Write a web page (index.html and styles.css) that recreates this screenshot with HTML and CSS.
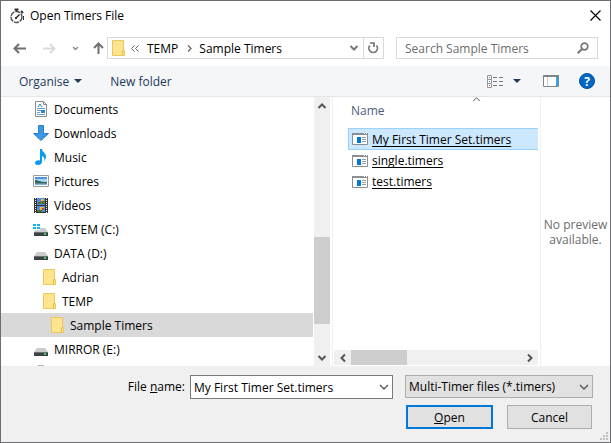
FILE: index.html
```html
<!DOCTYPE html>
<html lang="en-GB">
<head>
<meta charset="utf-8">
<title>Open Timers File</title>
<link rel="stylesheet" href="styles.css">
</head>
<body>
<svg class="defs" aria-hidden="true">
  <symbol id="folder" viewBox="0 0 16 16">
    <path d="M2.5 .5h11v10h1v5h-12z" fill="#ffe490" stroke="#ecc75c"/>
    <path d="M12.5 15v-4.500h1" fill="none" stroke="#e8bb3e"/>
  </symbol>
  <symbol id="drive" viewBox="0 0 16 16">
    <path d="M4 7h8l3 4H1z" fill="#c9cbcd"/>
    <path d="M1 11h14v4H1z" fill="#3c4043"/>
    <path d="M1 11h14v1H1z" fill="#6b7074"/>
    <path d="M11 12h2v2h-2z" fill="#37d651"/>
  </symbol>
  <symbol id="timerfile" viewBox="0 0 16 16">
    <path d="M.5 2.500h15v11H.5z" fill="#fff" stroke="#8a8f94"/>
    <path d="M0 2h16v2H0z" fill="#8a8f94"/>
    <path d="M12 2.500h1M14 2.500h1" stroke="#fff"/>
    <path d="M5 6h4v6H5z" fill="#0078d7"/>
    <path d="M10 6.500h4M10 8.500h4M10 10.500h4" stroke="#9a9da0"/>
  </symbol>
  <symbol id="chevron" viewBox="0 0 10 6">
    <path d="M1 1l4 4 4-4" fill="none" stroke="currentColor" stroke-width="1.300"/>
  </symbol>
  <symbol id="thick-chevron" viewBox="0 0 10 6">
    <path d="M1.500 1L5 4.500 8.500 1" fill="none" stroke="currentColor" stroke-width="2"/>
  </symbol>
</svg>

<div class="dialog">
  <header class="titlebar">
    <svg class="icon" viewBox="0 0 16 16"><circle cx="7.500" cy="9" r="5.500" fill="#fff" stroke="#555" stroke-width="1.500" stroke-dasharray="5 1"/><path d="M5.500 1.500h4M7.500 1.500v2M12 3l2 2" stroke="#333" stroke-width="2"/><path d="M7 10l3.500-3.500" stroke="#222" stroke-width="1.500"/><path d="M6 9h2v2H6zM14 8h1v4h-1z" fill="#333"/></svg>
    <h1>Open Timers File</h1>
    <button class="plain" aria-label="Close"><svg width="11" height="11" viewBox="0 0 11 11"><path d="M.5.5l10 10M10.500.5l-10 10" stroke="#000" stroke-width="1.200"/></svg></button>
  </header>

  <nav class="navbar">
    <div class="history">
      <button class="plain back" aria-label="Back"><svg width="13" height="11" viewBox="0 0 13 11"><path d="M13 5.500H1.500M6 1L1.500 5.500 6 10" fill="none" stroke="#707070" stroke-width="2"/></svg></button>
      <button class="plain forward" aria-label="Forward"><svg width="13" height="11" viewBox="0 0 13 11"><path d="M0 5.500h11.500M7 1l4.500 4.500L7 10" fill="none" stroke="#dcdcdc" stroke-width="2"/></svg></button>
      <button class="plain recent" aria-label="Recent locations"><svg width="7" height="5" viewBox="0 0 10 6"><use href="#thick-chevron"/></svg></button>
      <button class="plain" aria-label="Up"><svg width="11" height="12" viewBox="0 0 11 12"><path d="M5.500 12V1.500M1 6l4.500-4.500L10 6" fill="none" stroke="#707070" stroke-width="2"/></svg></button>
    </div>
    <div class="address">
      <svg class="icon" viewBox="0 0 16 16"><use href="#folder"/></svg>
      <svg class="crumb-more" width="8" height="7" viewBox="0 0 8 7"><path d="M3.500.5l-3 3 3 3M7.500.5l-3 3 3 3" fill="none" stroke="#666"/></svg>
      <a href="#temp">TEMP</a>
      <svg class="crumb-next" width="5" height="7" viewBox="0 0 5 7"><path d="M1 .5l3 3-3 3" fill="none" stroke="#666" stroke-width="1.300"/></svg>
      <a href="#sample">Sample Timers</a>
      <button class="plain drop" aria-label="Previous locations"><svg width="10" height="6"><use href="#thick-chevron"/></svg></button>
      <button class="plain refresh" aria-label="Refresh"><svg width="11" height="12" viewBox="0 0 11 12"><path d="M1.800 3.500A4.300 4.300 0 1 0 8.500 3.500" fill="none" stroke="#777" stroke-width="1.700"/><path d="M2 1h4v4" fill="none" stroke="#777" stroke-width="1.700"/></svg></button>
    </div>
    <div class="search">
      <input type="search" placeholder="Search Sample Timers" aria-label="Search Sample Timers">
      <svg width="12" height="12" viewBox="0 0 12 12"><circle cx="7.500" cy="4.500" r="3.300" fill="none" stroke="#777" stroke-width="1.700"/><path d="M5 7L.8 11.200" stroke="#777" stroke-width="2"/></svg>
    </div>
  </nav>

  <div class="toolbar">
    <button class="plain">Organise <svg width="8" height="4" viewBox="0 0 8 4"><path d="M0 0h8L4 4z" fill="#1e395b"/></svg></button>
    <button class="plain">New folder</button>
    <div class="views">
      <button class="plain" aria-label="Change your view"><svg width="16" height="13" viewBox="0 0 16 13"><path d="M.5.500h4v12h-4zM.5 4.500h4M.5 8.500h4" fill="#fff" stroke="#979797"/><path d="M2 2h1v1H2z" fill="#777"/><path d="M2 6h1v1H2z" fill="#1a85d8"/><path d="M2 10h1v1H2z" fill="#d22"/><path d="M6 2.500h4M12 2.500h4M6 6.500h4M12 6.500h4M6 10.500h4M12 10.500h4" stroke="#777"/></svg></button>
      <button class="plain more" aria-label="More options"><svg width="8" height="4" viewBox="0 0 8 4"><path d="M0 0h8L4 4z" fill="#1e395b"/></svg></button>
      <button class="plain pane" aria-label="Hide the preview pane"><svg width="16" height="12" viewBox="0 0 16 12"><path d="M.5.500h15v11H.5z" fill="#fff" stroke="#808488"/><path d="M0 0h16v2H0z" fill="#808488"/><path d="M4.500 2v9" stroke="#ccc"/><path d="M13 2h2v9h-2z" fill="#33a3ee"/></svg></button>
      <button class="plain help" aria-label="Help">?</button>
    </div>
  </div>

  <main class="panes">
    <ul class="tree">
      <li><svg class="icon" viewBox="0 0 16 16"><path d="M2.500.5h8l3 3v12h-11z" fill="#fff" stroke="#8c8c8c"/><path d="M10.500.5v3h3" fill="none" stroke="#8c8c8c"/><path d="M5 6l2-3 2 3" fill="none" stroke="#2585d0"/><path d="M4 7.500h8M4 9.500h4M4 11.500h3M4 13.500h8" stroke="#6aa2cf"/><path d="M8 9h4v3H8z" fill="#2e86c9"/></svg>Documents</li>
      <li><svg class="icon" viewBox="0 0 16 16"><path d="M5.500.5h5v8h5L8 15.500.5 8.500h5z" fill="#3b97e8" stroke="#2d7fca"/></svg>Downloads</li>
      <li><svg class="icon" viewBox="0 0 16 16"><path d="M7 0h2c0 3 4 4 4 7.500 0 2-1 3.500-2 4.500 1-3 0-4-2-5v6c0 2-2 3-4 3s-3-1-3-2.300C2 12 4 11 7 11.400z" fill="#0a98f5"/></svg>Music</li>
      <li><svg class="icon" viewBox="0 0 16 16"><path d="M.5 2.500h15v11H.5z" fill="#fff" stroke="#9a9a9a"/><path d="M2 4h12v8H2z" fill="#a9d5f5"/><path d="M2 4h12v2H2z" fill="#4d94dc"/><path d="M2 7c3 0 4 2 12 2v3H2z" fill="#34675f"/><path d="M2 10.500h12V12H2z" fill="#82b3d2"/></svg>Pictures</li>
      <li><svg class="icon" viewBox="0 0 16 16"><path d="M1 1h14v15H1z" fill="#333"/><path d="M4 1h8v7H4zM4 9h8v6H4z" fill="#4d8ee6"/><path d="M2.500 1v15M13.500 1v15" stroke="#eee" stroke-dasharray="1 1"/><path d="M8 2h3v3H8zM7 10h4v3H7z" fill="#efb72e"/><path d="M9 4h3v3H9zM4 13h5v2H4zM5 5h3v2H5z" fill="#4c7136"/><path d="M8 4h1v2H8zM9 11h2v2H9z" fill="#c7452c"/></svg>Videos</li>
      <li><svg class="icon" viewBox="0 0 16 16"><use href="#drive"/><path d="M0 2h7v7H0z" fill="#fff"/><path d="M0 3h3v2H0zM4 3h3v2H4zM0 6h3v2H0zM4 6h3v2H4z" fill="#16b2ee"/></svg>SYSTEM (C:)</li>
      <li><svg class="icon" viewBox="0 0 16 16"><use href="#drive"/></svg>DATA (D:)</li>
      <li class="level-2"><svg class="icon" viewBox="0 0 16 16"><use href="#folder"/></svg>Adrian</li>
      <li class="level-2"><svg class="icon" viewBox="0 0 16 16"><use href="#folder"/></svg>TEMP</li>
      <li class="level-3 selected"><svg class="icon" viewBox="0 0 16 16"><use href="#folder"/></svg>Sample Timers</li>
      <li><svg class="icon" viewBox="0 0 16 16"><use href="#drive"/></svg>MIRROR (E:)</li>
      <li><svg class="icon" viewBox="0 0 16 16"><path d="M5 0h6l2 4H3z" fill="#b5b8ba"/></svg></li>
    </ul>
    <div class="vscroll">
      <button class="plain" aria-label="Scroll up"><svg class="up" width="10" height="6"><use href="#thick-chevron"/></svg></button>
      <div class="track"><div class="thumb"></div></div>
      <button class="plain" aria-label="Scroll down"><svg width="10" height="6"><use href="#thick-chevron"/></svg></button>
    </div>

    <section class="files">
      <svg class="sort" width="9" height="5" viewBox="0 0 10 6"><path d="M1 5l4-4 4 4" fill="none" stroke="#555" stroke-width="1.200"/></svg>
      <table>
        <thead><tr><th>Name</th></tr></thead>
        <tbody>
          <tr class="selected"><td><a href="#f1"><svg class="icon" viewBox="0 0 16 16"><use href="#timerfile"/></svg><span>My First Timer Set.timers</span></a></td></tr>
          <tr><td><a href="#f2"><svg class="icon" viewBox="0 0 16 16"><use href="#timerfile"/></svg><span>single.timers</span></a></td></tr>
          <tr><td><a href="#f3"><svg class="icon" viewBox="0 0 16 16"><use href="#timerfile"/></svg><span>test.timers</span></a></td></tr>
        </tbody>
      </table>
      <div class="hscroll">
        <button class="plain" aria-label="Scroll left"><svg class="left" width="10" height="6"><use href="#thick-chevron"/></svg></button>
        <div class="track"><div class="thumb"></div></div>
        <button class="plain" aria-label="Scroll right"><svg class="right" width="10" height="6"><use href="#thick-chevron"/></svg></button>
      </div>
    </section>

    <aside class="preview">No preview available.</aside>
  </main>

  <footer class="footer">
    <label for="filename">File <u>n</u>ame:</label>
    <div class="field">
      <input id="filename" type="text" value="My First Timer Set.timers">
      <button class="plain" aria-label="Recent file names"><svg width="10" height="6"><use href="#chevron"/></svg></button>
    </div>
    <div class="filetype">
      <select aria-label="File type"><option>Multi-Timer files (*.timers)</option></select>
      <svg width="10" height="6"><use href="#chevron"/></svg>
    </div>
    <div class="actions">
      <button class="action default"><span><u>O</u>pen</span></button>
      <button class="action">Cancel</button>
    </div>
    <svg class="grip" width="8" height="8" viewBox="0 0 8 8"><path d="M6 0h2v2H6zM3 3h2v2H3zM6 3h2v2H6zM0 6h2v2H0zM3 6h2v2H3zM6 6h2v2H6z" fill="#bfbfbf"/></svg>
  </footer>
</div>
</body>
</html>
```
FILE: styles.css
```css
* { box-sizing: border-box; }

body {
  margin: 0;
  font: 12px/15px "Segoe UI", "Open Sans", "Noto Sans", sans-serif;
  color: #000;
}

button, input, select { font: inherit; color: inherit; }
a { color: inherit; text-decoration: none; }
svg { display: block; flex: none; }
.defs { position: absolute; width: 0; height: 0; }
.icon { width: 16px; height: 16px; }

.plain {
  display: flex;
  align-items: center;
  justify-content: center;
  padding: 0;
  border: 0;
  background: none;
}

.dialog {
  display: flex;
  flex-direction: column;
  height: 100vh;
  border: 1px solid #6d6d70;
  background: #fff;
}

/* Title bar */
.titlebar {
  display: flex;
  align-items: center;
  height: 29px;
  padding: 0 9px 0 8px;
}
.titlebar h1 {
  flex: 1;
  margin: 0 0 0 5px;
  font-size: 12px;
  font-weight: 400;
}

/* Navigation */
.navbar {
  display: flex;
  align-items: center;
  height: 36px;
  padding: 0 12px;
}
.history {
  display: flex;
  align-items: center;
  width: 94px;
  color: #888;
}
.forward { margin-left: 17px; }
.recent { margin: 0 14px 0 16px; }
.address, .search {
  display: flex;
  align-items: center;
  height: 22px;
  border: 1px solid #d9d9d9;
}
.address {
  flex: 277 1 277px;
  padding-left: 2px;
}
.crumb-more { margin: 0 8px 0 5px; }
.crumb-next { margin: 0 7px 0 9px; }
.drop {
  width: 18px;
  height: 20px;
  margin-left: auto;
  color: #777;
}
.refresh {
  width: 20px;
  height: 20px;
  border-left: 1px solid #d9d9d9;
}
.search {
  flex: 202 1 202px;
  margin-left: 12px;
  padding: 0 8px;
}
.search input {
  flex: 1;
  min-width: 0;
  padding: 0;
  border: 0;
  outline: 0;
  background: none;
}
.search input::placeholder { color: #6d6d6d; opacity: 1; }

/* Command bar */
.toolbar {
  display: flex;
  align-items: center;
  gap: 28px;
  height: 31px;
  padding: 0 15px 0 18px;
  border-bottom: 1px solid #e5e5e5;
  background: #f4f6f8;
  color: #1e395b;
}
.toolbar .plain { gap: 5px; }
.views {
  display: flex;
  align-items: center;
  margin-left: auto;
}
.views .more { margin: 0 22px 0 10px; }
.views .pane { margin-right: 20px; }
.views .help {
  width: 16px;
  height: 16px;
  border: 1px solid #00539c;
  border-radius: 50%;
  background: #0067c5;
  color: #fff;
  font-weight: 700;
}

/* Panes */
.panes {
  display: flex;
  flex: 1;
  min-height: 0;
}
.tree {
  flex: 312 1 312px;
  margin: 0;
  padding: 0;
  overflow: hidden;
  list-style: none;
}
.tree li {
  display: flex;
  align-items: center;
  gap: 5px;
  height: 24px;
  padding-left: 32px;
}
.tree .level-2 { padding-left: 40px; }
.tree .level-3 { padding-left: 48px; }
.tree .selected { background: #d9d9d9; }

.vscroll, .hscroll {
  display: flex;
  background: #f0f0f0;
  color: #555;
}
.vscroll {
  flex-direction: column;
  width: 16px;
  margin-left: 1px;
}
.vscroll .plain { height: 17px; }
.hscroll .plain { width: 17px; }
.track {
  display: flex;
  flex: 1;
}
.thumb { background: #cdcdcd; }
.vscroll .track { flex-direction: column; }
.vscroll .thumb { height: 37%; margin-top: 123px; }
.hscroll .thumb { width: 33%; }
.up { transform: rotate(180deg); }
.left { transform: rotate(90deg); }
.right { transform: rotate(-90deg); }

.files {
  position: relative;
  display: flex;
  flex: 209 1 209px;
  flex-direction: column;
  justify-content: space-between;
  margin-left: 2px;
  padding: 0 2px 0 1px;
  border: solid #f0f0f0;
  border-width: 0 1px;
}
.sort {
  position: absolute;
  top: 0;
  left: 67%;
}
.files table {
  margin-left: 14px;
  border-collapse: collapse;
}
.files th {
  height: 31px;
  padding: 0 0 4px 3px;
  color: #4c607a;
  font-weight: 400;
  text-align: left;
}
.files td { padding: 0; }
.files td a {
  display: flex;
  align-items: center;
  gap: 4px;
  height: 21px;
  padding-left: 4px;
  text-decoration: underline;
  text-decoration-skip-ink: none;
  text-underline-offset: 2px;
}
.files .selected a {
  height: 22px;
  padding-left: 3px;
  border: 1px solid #99d1ff;
  border-right: 0;
  background: #cce8ff;
}
.hscroll { height: 15px; margin-bottom: 1px; }

.preview {
  display: flex;
  align-items: center;
  flex: 0 0 69px;
  color: #6d6d6d;
  text-align: center;
}

/* Footer */
.footer {
  position: relative;
  display: grid;
  grid-template-columns: 184px 1fr 188px;
  column-gap: 12px;
  row-gap: 6px;
  padding: 9px 17px 13px 0;
  background: #f0f0f0;
}
.footer label {
  line-height: 24px;
  text-align: right;
}
.field {
  display: flex;
  height: 24px;
  margin-left: -7px;
  border: 1px solid #7a7a7a;
  background: #fff;
}
.field input {
  flex: 1;
  min-width: 0;
  padding: 0 3px;
  border: 0;
  outline: 0;
  background: none;
}
.field .plain { width: 17px; color: #555; }
.filetype {
  position: relative;
  height: 23px;
  color: #555;
}
.filetype select {
  width: 100%;
  height: 23px;
  padding: 0 3px;
  border: 1px solid #adadad;
  border-radius: 0;
  background: #e1e1e1;
  color: #000;
  appearance: none;
}
.filetype svg {
  position: absolute;
  top: 9px;
  right: 4px;
  pointer-events: none;
}
.actions {
  display: flex;
  grid-column: 3;
  gap: 14px;
  padding: 0 1px;
}
.action {
  flex: 1;
  height: 24px;
  padding: 0;
  border: 1px solid #adadad;
  background: #e1e1e1;
}
.default { border: 2px solid #0078d7; }
.grip {
  position: absolute;
  right: 2px;
  bottom: 2px;
}
```
